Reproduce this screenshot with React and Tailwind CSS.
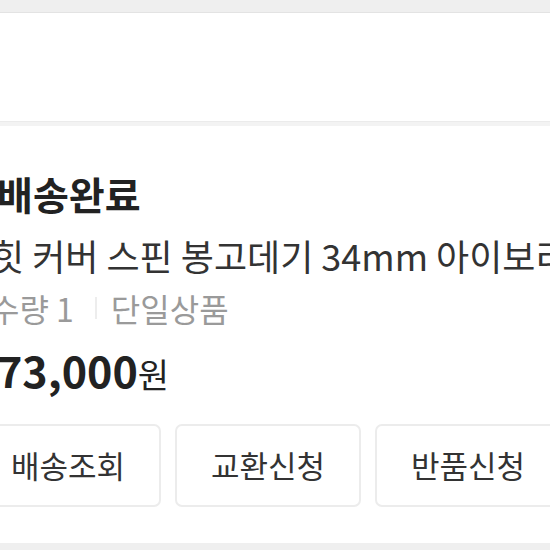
export default function App() {
  const buttons = ['배송조회', '교환신청', '반품신청'];

  return (
    <div
      className="w-[550px] h-[550px] overflow-hidden bg-[#efefef] flex flex-col"
      style={{ fontFamily: '"Noto Sans CJK KR", "Noto Sans", sans-serif' }}
    >
      {/* top bar remainder */}
      <div className="h-[13px] shrink-0 bg-[#efefef] border-b border-[#e3e3e3]" />
      <div className="h-[108px] shrink-0 bg-white" />
      <div className="h-[5px] shrink-0 bg-[#f3f3f3] border-t border-[#ebebeb]" />

      {/* order card */}
      <div className="h-[417px] shrink-0 bg-white ml-[-25px] w-[620px] pt-[43px]">
        <div className="pl-[22px]">
          <h2 className="text-[39px] leading-[48px] font-bold text-[#222] whitespace-nowrap">배송완료</h2>
          <p className="mt-[15px] text-[36px] leading-[46px] text-[#333] whitespace-nowrap ml-[-6px]">
            힛 커버 스핀 봉고데기 34mm 아이보리
          </p>
          <div className="mt-[10px] flex items-center text-[32px] leading-[40px] text-[#9a9a9a] whitespace-nowrap ml-[-7px]">
            <span>수량 1</span>
            <span className="ml-[21px] mr-[14px] w-[2px] h-[22px] bg-[#ededed]" />
            <span>단일상품</span>
          </div>
          <div className="mt-[16px] flex items-baseline text-[#222] whitespace-nowrap">
            <span className="text-[43px] leading-[50px] font-bold">73,000</span>
            <span className="text-[34px] leading-[50px]">원</span>
          </div>
        </div>

        <div className="mt-[25px] flex gap-[14px]">
          {buttons.map((b) => (
            <button
              key={b}
              className="w-[186px] h-[83px] shrink-0 rounded-[7px] border-2 border-[#ececec] bg-white text-[31px] text-[#333] flex items-center justify-center whitespace-nowrap"
            >
              {b}
            </button>
          ))}
        </div>
      </div>
    </div>
  );
}
